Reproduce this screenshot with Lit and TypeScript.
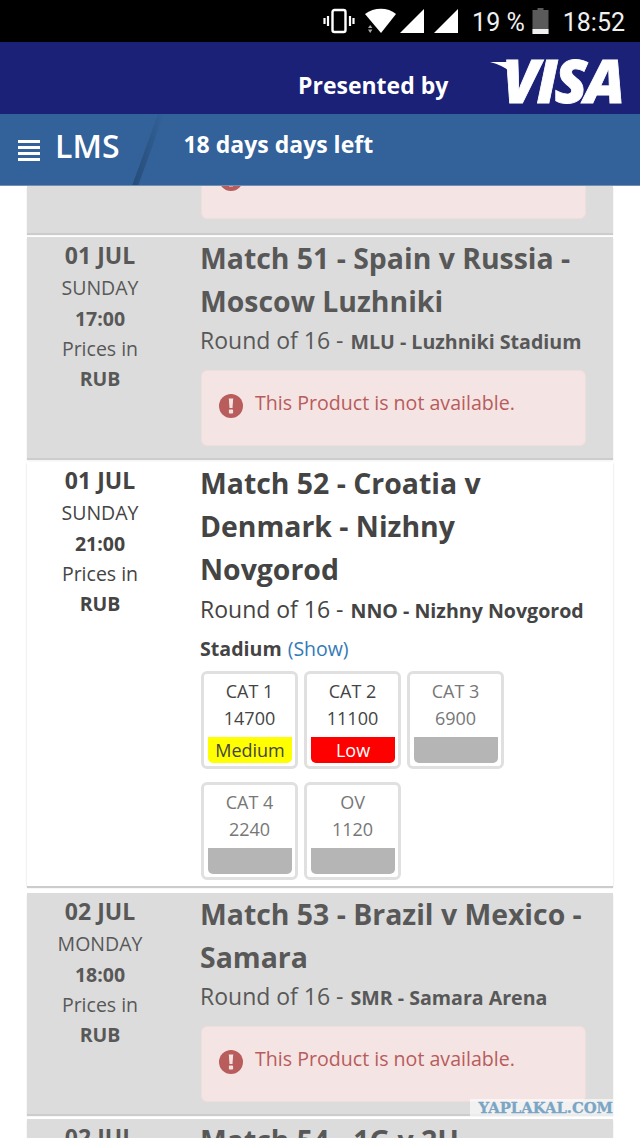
import { LitElement, html, css } from "lit";
import { customElement } from "lit/decorators.js";

const alertBox = html`<div class="alert">
  <svg class="alert-icon" width="24" height="24" viewBox="0 0 24 24">
    <circle cx="12" cy="12" r="12" fill="#b85c5c"></circle>
    <path d="M9.8 4.500h4.400l-.7 9.500h-3z" fill="#f5e3e3"></path>
    <rect x="9.900" y="15.600" width="4.200" height="4" rx=".8" fill="#f5e3e3"></rect>
  </svg>
  <span>This Product is not available.</span>
</div>`;

type Cat = { n: string; p: string; s?: string; on?: boolean };
const cats: Cat[] = [
  { n: "CAT 1", p: "14700", s: "medium", on: true },
  { n: "CAT 2", p: "11100", s: "low", on: true },
  { n: "CAT 3", p: "6900" },
  { n: "CAT 4", p: "2240" },
  { n: "OV", p: "1120" },
];

@customElement("app-root")
export class AppRoot extends LitElement {
  static styles = css`
    :host {
      display: block;
      width: 640px;
      height: 1138px;
      overflow: hidden;
      position: relative;
      background: #fff;
      font-family: "Open Sans", sans-serif;
      color: #585858;
    }
    .status {
      height: 42px;
      background: #000;
      color: #f0f0f0;
      display: flex;
      align-items: center;
      justify-content: flex-end;
      font-family: Roboto, sans-serif;
      font-size: 25px;
      padding-right: 15px;
    }
    .status svg { display: block; }
    .status span { margin-top: 2px; }
    .vib { margin-right: 10px; }
    .wifi { margin-right: 2px; }
    .sig { margin-right: 8px; }
    .sig2 { margin-right: 13px; }
    .pct { margin-right: 7px; }
    .batt { margin-right: 14px; }
    .visa {
      height: 72px;
      background: #1a2176;
      display: flex;
      align-items: center;
      justify-content: flex-end;
      color: #fff;
      padding-right: 18px;
    }
    .presented {
      font-size: 23px;
      font-weight: 700;
      margin: 14px 54px 0 0;
    }
    .logo {
      position: relative;
      font-style: italic;
      font-weight: 800;
      font-size: 60px;
      line-height: 72px;
      letter-spacing: -3px;
      margin-top: 4px;
      -webkit-text-stroke: 0.8px #fff;
    }
    .flick { position: absolute; left: -12px; top: 14px; }
    .nav {
      height: 72px;
      background: #336199;
      color: #fff;
      display: flex;
      align-items: center;
      position: relative;
      overflow: hidden;
      border-bottom: 1px solid #6f8fb5;
      box-sizing: border-box;
    }
    .slash { position: absolute; left: 130px; top: 0; }
    .burger { margin-left: 18px; display: flex; flex-direction: column; gap: 2.500px; width: 22px; margin-top: 2px; }
    .burger i { display: block; height: 3.500px; background: #fff; }
    .lms { font-size: 32px; font-weight: 600; margin-left: 15px; margin-bottom: 8px; }
    .left { font-size: 23px; font-weight: 700; margin: 0 0 11px 64px; position: relative; }
    .list { padding: 0 27px; display: flex; flex-direction: column; }
    .card {
      display: grid;
      grid-template-columns: 146px 1fr;
      column-gap: 27px;
      background: #dcdcdc;
      box-shadow: 0 2px 1px #ccc;
      padding-right: 27px;
      box-sizing: border-box;
    }
    .card.clip { height: 47px; overflow: hidden; grid-template-rows: 33px; align-items: end; padding-bottom: 14px; margin-bottom: 4px; }
    .card.clip .alert { grid-column: 2; margin-top: 0; }
    .card.g1 { height: 221px; margin-bottom: 4px; }
    .card.open { background: #fff; color: #444; height: 424px; margin-bottom: 7px; box-shadow: 0 2px 1px #ccc, 0 0 3px #eee; }
    .card.open .sub { margin-top: -1px; }
    .card.g2 { height: 221px; margin-bottom: 5px; }
    .card.g3 { height: 60px; overflow: hidden; }
    .date { text-align: center; font-size: 19.500px; line-height: 30px; padding-top: 3px; }
    .date b { display: block; font-weight: 700; }
    .date .day { font-size: 23px; margin-bottom: 3px; }
    .date span { display: block; }
    .date .wk { margin-bottom: 1px; }
    .title {
      font-size: 28.400px;
      line-height: 43px;
      font-weight: 700;
      margin: 0;
    }
    .sub { font-size: 23px; line-height: 38px; margin-top: -2px; }
    .sub b { font-size: 19.600px; font-weight: 700; line-height: 1; margin-left: 1px; }
    .sub a { color: #337ab7; font-size: 19.500px; line-height: 1; }
    .alert {
      height: 76px;
      box-sizing: border-box;
      background: #f5e4e4;
      border-radius: 6px;
      border: 1px solid #f0dede;
      display: flex;
      align-items: center;
      padding: 0 18px 12px 17px;
      margin-left: 1px;
      gap: 12px;
      color: #b85c5c;
      font-size: 19.600px;
      margin-top: 11px;
    }
    .alert-icon { flex: none; margin-top: 8px; }
    .cats { display: flex; flex-wrap: wrap; gap: 13px 6px; margin: 5px 0 0 1px; }
    .cat {
      width: 97px;
      height: 98px;
      box-sizing: border-box;
      border: 3px solid #e0e0e0;
      border-radius: 6px;
      text-align: center;
      font-size: 18px;
      line-height: 27px;
      padding: 4px 3px 3px 3px;
      color: #777;
      display: flex;
      flex-direction: column;
      background: #fff;
    }
    .cat.on { color: #444; }
    .st {
      height: 26px;
      line-height: 26px;
      background: #b5b5b5;
      border-radius: 0 0 5px 5px;
      font-size: 18px;
      margin: 5px 0 0 1px;
    }
    .st.medium { background: #ffff00; color: #444; }
    .st.low { background: #ff0000; color: #fff; }
    .watermark {
      position: absolute;
      left: 470px;
      top: 1099px;
      width: 143px;
      height: 17px;
      background: rgba(255, 255, 255, 0.6);
      color: #7aa5c4;
      font-family: "DejaVu Serif", serif;
      font-weight: 700;
      font-size: 14.800px;
      line-height: 17px;
      text-align: right;
      white-space: nowrap;
      overflow: hidden;
      -webkit-text-stroke: 0.3px #7aa5c4;
    }
  `;

  private date(d: string, day: string, t: string) {
    return html`<div class="date">
      <b class="day">${d}</b><span class="wk">${day}</span><b>${t}</b><span>Prices in</span><b>RUB</b>
    </div>`;
  }

  render() {
    return html`
      <div class="status">
        <svg class="vib" width="32" height="26" viewBox="0 0 32 26" fill="none" stroke="#fff">
          <rect x="9.500" y="2" width="13" height="22" rx="2" stroke-width="2.400"></rect>
          <path d="M5 8v10M1.500 10v6M27 8v10M30.500 10v6" stroke-width="2.200"></path>
        </svg>
        <svg class="wifi" width="32" height="26" viewBox="0 0 32 26">
          <path d="M0 6C9 -1 23 -1 31 6L16 25z" fill="#fff"></path>
          <path d="M3 20l2.200-3 2.200 3zM3 21.500h4.400L5.200 25z" fill="#aaa"></path>
        </svg>
        <svg class="sig" width="26" height="26" viewBox="0 0 26 26"><path d="M25 1v24H1z" fill="#fff"></path></svg>
        <svg class="sig2" width="26" height="26" viewBox="0 0 26 26"><path d="M25 1v24H1z" fill="#fff"></path></svg>
        <span class="pct">19 %</span>
        <svg class="batt" width="17" height="28" viewBox="0 0 17 28">
          <path d="M5.500 1h6v2h5v24H.5V3h5z" fill="#5a5a5a"></path>
          <rect x=".5" y="22" width="16" height="5" fill="#f0f0f0"></rect>
        </svg>
        <span>18:52</span>
      </div>
      <div class="visa">
        <span class="presented">Presented by</span>
        <span class="logo">
          <svg class="flick" width="26" height="22" viewBox="0 0 26 22"><path d="M0 4h24l2 16C20 12 12 7 0 4z" fill="#fff"></path></svg>
          VISA
        </span>
      </div>
      <div class="nav">
        <svg class="slash" width="40" height="72" viewBox="0 0 40 72">
          <defs>
            <linearGradient id="sl" x1="0" x2="1" y1="0" y2="0">
              <stop offset="0" stop-color="#264c78"></stop>
              <stop offset="1" stop-color="#336199"></stop>
            </linearGradient>
          </defs>
          <path d="M28 0h6L8 72H2z" fill="url(#sl)"></path>
        </svg>
        <div class="burger"><i></i><i></i><i></i><i></i></div>
        <span class="lms">LMS</span>
        <span class="left">18 days days left</span>
      </div>
      <div class="list">
        <div class="card clip"><div></div>${alertBox}</div>
        <div class="card g1">
          ${this.date("01 JUL", "SUNDAY", "17:00")}
          <div>
            <h2 class="title">Match 51 - Spain v Russia - Moscow Luzhniki</h2>
            <div class="sub">Round of 16 - <b>MLU - Luzhniki Stadium</b></div>
            ${alertBox}
          </div>
        </div>
        <div class="card open">
          ${this.date("01 JUL", "SUNDAY", "21:00")}
          <div>
            <h2 class="title">Match 52 - Croatia v Denmark - Nizhny Novgorod</h2>
            <div class="sub">Round of 16 - <b>NNO - Nizhny Novgorod Stadium</b> <a>(Show)</a></div>
            <div class="cats">
              ${cats.map(
                (c) => html`<div class="cat ${c.on ? "on" : ""}">
                  <div>${c.n}</div>
                  <div>${c.p}</div>
                  <div class="st ${c.s ?? ""}">${c.s === "medium" ? "Medium" : c.s === "low" ? "Low" : ""}</div>
                </div>`
              )}
            </div>
          </div>
        </div>
        <div class="card g2">
          ${this.date("02 JUL", "MONDAY", "18:00")}
          <div>
            <h2 class="title">Match 53 - Brazil v Mexico - Samara</h2>
            <div class="sub">Round of 16 - <b>SMR - Samara Arena</b></div>
            ${alertBox}
          </div>
        </div>
        <div class="card g3">
          ${this.date("02 JUL", "MONDAY", "")}
          <div><h2 class="title">Match 54 - 1G v 2H</h2></div>
        </div>
      </div>
      <div class="watermark">YAPLAKAL.COM</div>
    `;
  }
}
